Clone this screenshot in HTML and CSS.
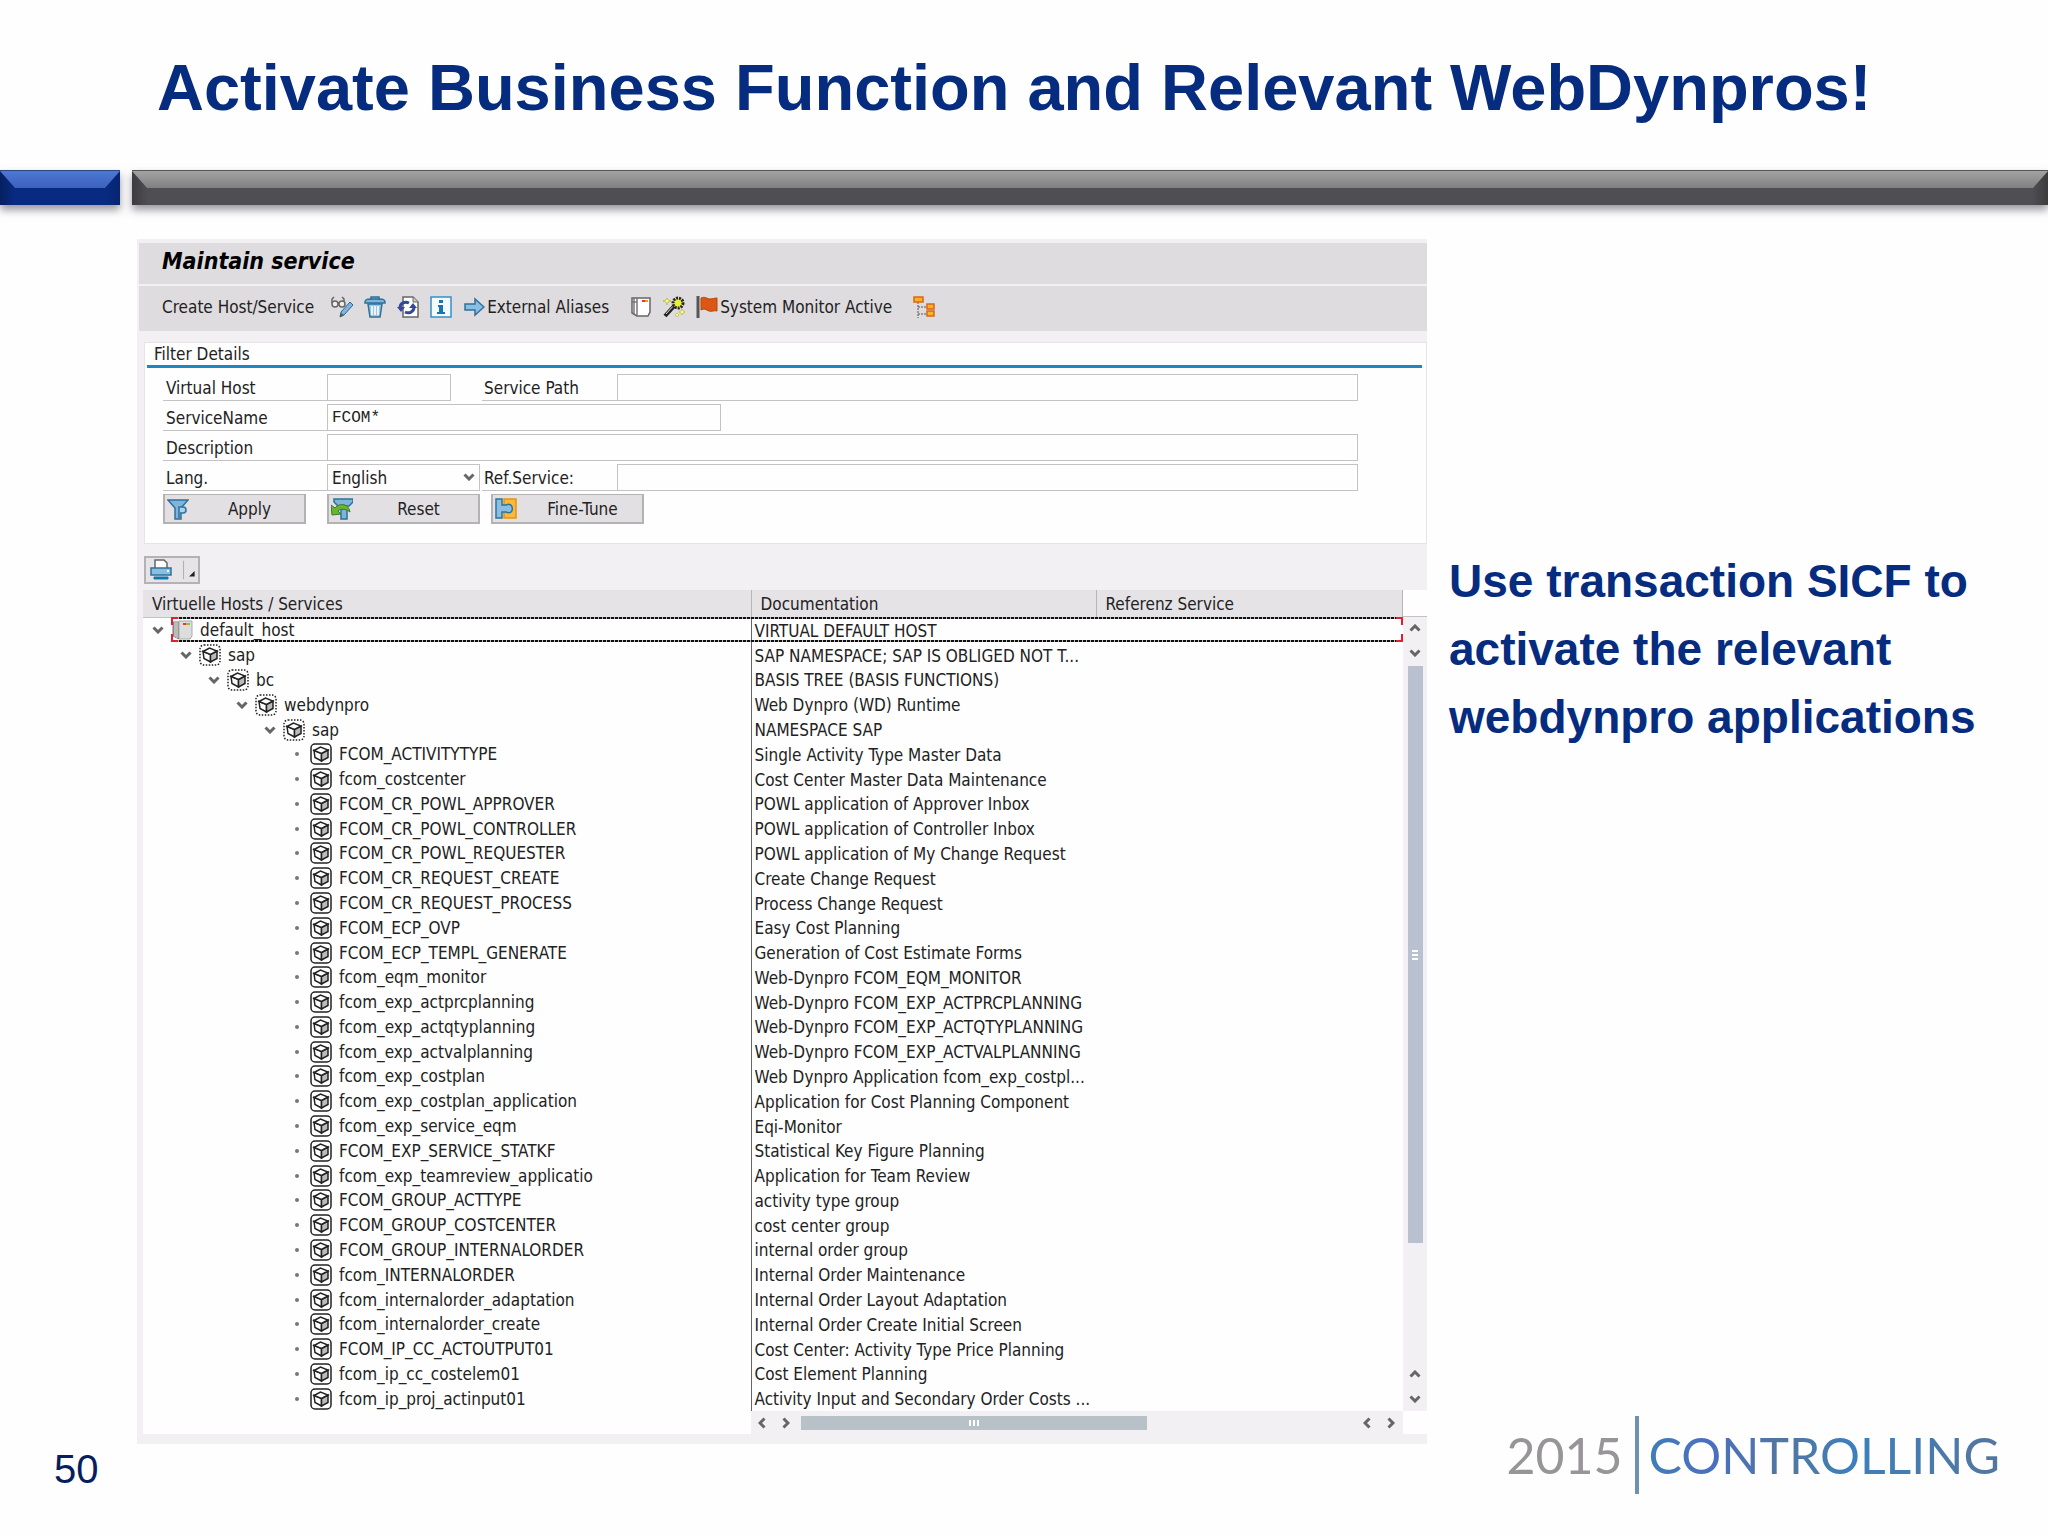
FILE: index.html
```html
<!DOCTYPE html>
<html lang="en">

<head>
  <meta charset="UTF-8">
  <meta name="viewport" content="width=device-width, initial-scale=1.0">
  <title>Activate Business Function and Relevant WebDynpros!</title>
  <link rel="stylesheet" href="styles.css">
</head>

<body>
  <!-- shared icons -->
  <svg class="symbols" aria-hidden="true">
    <symbol id="down" viewBox="0 0 12 8">
      <path d="M1.5 1.5 6 6l4.500-4.500" fill="none" stroke="#666" stroke-width="3" />
    </symbol>
    <symbol id="dot" viewBox="0 0 12 8">
      <circle cx="6" cy="4" r="2" fill="#777" />
    </symbol>
    <symbol id="cube" viewBox="0 0 22 22">
      <path d="M4 7.500 11.500 10.500V18L5 14.500Z" fill="#fff" stroke="#222" stroke-width="1.500" />
      <path d="M11.500 10.500 18 7v7.500L11.500 18Z" fill="#bbb" stroke="#222" stroke-width="1.500" />
      <path d="M4 7.500 10.500 4 18 7l-6.500 3.500Z" fill="#fff" stroke="#222" stroke-width="1.500" />
    </symbol>
    <symbol id="service" viewBox="0 0 22 22">
      <rect x="1" y="1" width="20" height="20" rx="4" fill="#fff" stroke="#222" stroke-width="1.500" />
      <use href="#cube" width="22" height="22" />
    </symbol>
    <symbol id="node" viewBox="0 0 22 22">
      <rect x="1" y="1" width="20" height="20" rx="4" fill="#fff" stroke="#222" stroke-width="1.500" stroke-dasharray="1.500 1.500" />
      <use href="#cube" width="22" height="22" />
    </symbol>
    <symbol id="host" viewBox="0 0 22 22">
      <path d="M2 3h6v17l-6-3Z" fill="#999" stroke="#777" />
      <path d="M4 3v15M6 3v16" stroke="#ddd" />
      <path d="M8 2h13v15l-2 3H8Z" fill="#ddd" stroke="#aaa" />
      <path d="M12 4h3v2h-3Z" fill="#e33" />
      <path d="M15 4h4v2h-4Z" fill="#9b3" />
    </symbol>
  </svg>

  <header>
    <h1>Activate Business Function and Relevant WebDynpros!</h1>
    <div class="rule">
      <span class="bar bar-blue"></span>
      <span class="bar bar-grey"></span>
    </div>
  </header>

  <main>
    <section class="window">
      <h2>Maintain service</h2>
      <div class="toolbar">
        <button type="button" class="create">Create Host/Service</button>
        <button type="button" aria-label="Display / Change">
          <svg class="icon" viewBox="0 0 22 22">
            <g fill="#eee" stroke="#666" stroke-width="1.500">
              <circle cx="4" cy="8" r="3" />
              <circle cx="11" cy="8" r="3" />
              <path d="M1 7V3l2-2M8 7h-1M13 6V3l-2-2" fill="none" />
            </g>
            <path d="m9 21 1-5L19 6l3 3-9 10Z" fill="#7fb4dc" stroke="#2a6a94" />
            <path d="m9 21 1-4 3 2Z" fill="#555" />
          </svg>
        </button>
        <button type="button" aria-label="Delete">
          <svg class="icon" viewBox="0 0 22 22">
            <path d="M4 8h14l-2 13H6Z" fill="#9cc8e6" stroke="#2f7199" stroke-width="1.500" />
            <path d="M8 10v9M11 10v9M14 10v9" stroke="#fff" stroke-width="1.500" />
            <path d="M7 3V1h8v2M1 6c0-3 2-3 10-3s10 0 10 3v1H1Z" fill="#7fb4dc" stroke="#2f7199" stroke-width="1.500" />
          </svg>
        </button>
        <button type="button" aria-label="Refresh">
          <svg class="icon" viewBox="0 0 22 22">
            <path d="M6 1h10l5 5v15H6Z" fill="#fff" stroke="#666" stroke-width="1.500" />
            <path d="M16 1v5h5" fill="#ccc" stroke="#666" />
            <path d="M3 12c0-5 5-7 9-5M17 11c0 5-5 7-9 5" fill="none" stroke="#35499c" stroke-width="3" />
            <path d="M0 11h8l-4 5ZM12 12h8l-4-5Z" fill="#35499c" />
          </svg>
        </button>
        <button type="button" aria-label="Information">
          <svg class="icon" viewBox="0 0 22 22">
            <rect x="1" y="1" width="20" height="20" fill="#f4fbff" stroke="#3590c8" stroke-width="1.500" />
            <path d="M9 4h4v3H9ZM8 9h5v7h2v2H7v-2h2v-5H8Z" fill="#1577ad" />
          </svg>
        </button>
        <button type="button">
          <svg class="icon" viewBox="0 0 22 22">
            <path d="M2 8h10V3l9 8-9 8v-5H2Z" fill="#8abfe3" stroke="#2f7199" stroke-width="1.500" />
          </svg>
          External Aliases
        </button>
        <button type="button" class="spaced" aria-label="Server">
          <svg class="icon" viewBox="0 0 22 22">
            <path d="M2 2h18v14l-2 4H7l-5-3Z" fill="#fff" stroke="#666" stroke-width="1.500" />
            <path d="M7 2v17M4 2v16M2 6h5" stroke="#777" stroke-width="1.500" />
            <path d="M12 4h3v2h-3Z" fill="#e33" />
            <path d="M15 4h3v2h-3Z" fill="#f90" />
          </svg>
        </button>
        <button type="button" aria-label="Wizard">
          <svg class="icon" viewBox="0 0 22 22">
            <path d="m2 20 11-12" stroke="#222" stroke-width="4" />
            <path d="m3 18 9-10" stroke="#ddd" />
            <circle cx="15" cy="7" r="5" fill="#e6f03c" stroke="#222" stroke-width="3" stroke-dasharray="2 1" />
            <path d="m4 2 1 2 3 1-3 1-1 3-1-3-3-1 3-1ZM19 13l1 2 2 1-2 1-1 2-1-2-2-1 2-1ZM14 17l2 2-2 2-2-2Z" fill="#ffff70" stroke="#98a020" stroke-width="0.500" />
          </svg>
        </button>
        <button type="button">
          <svg class="icon" viewBox="0 0 22 22">
            <path d="M2 0v22" stroke="#555" stroke-width="3" />
            <path d="M5 2c4-2 6 1 9 1s4-1 7-1v13c-3-1-5 1-8 0s-4-3-8-1Z" fill="#dc5716" stroke="#b5480f" />
          </svg>
          System Monitor Active
        </button>
        <button type="button" class="spaced" aria-label="Hierarchy">
          <svg class="icon" viewBox="0 0 22 22">
            <path d="M5 6v16M5 11h9M5 18h9" fill="none" stroke="#555" stroke-dasharray="2 1" />
            <path d="M1 1h9v5H1ZM14 8h7v5h-7ZM14 15h7v5h-7Z" fill="#fbb321" stroke="#d9651c" stroke-width="1.500" />
          </svg>
        </button>
      </div>

      <form class="filter">
        <h3>Filter Details</h3>
        <div class="fields">
          <div class="row">
            <label for="vhost">Virtual Host</label>
            <input type="text" id="vhost" class="short">
            <label for="path" class="second after-gap">Service Path</label>
            <input type="text" id="path" class="fill">
          </div>
          <div class="row">
            <label for="sname">ServiceName</label>
            <input type="text" id="sname" class="medium" value="FCOM*">
          </div>
          <div class="row">
            <label for="desc">Description</label>
            <input type="text" id="desc" class="fill">
          </div>
          <div class="row">
            <label for="lang">Lang.</label>
            <span class="select">
              <select id="lang">
                <option>English</option>
              </select>
              <svg class="arrow" viewBox="0 0 12 8"><use href="#down" /></svg>
            </span>
            <label for="ref" class="second">Ref.Service:</label>
            <input type="text" id="ref" class="fill">
          </div>
          <div class="buttons">
            <button type="button" class="apply">
              <svg class="icon" viewBox="0 0 22 22">
                <path d="M1 2h20l-7 8v11H8V10Z" fill="#7fb4dc" stroke="#2f7199" stroke-width="1.500" />
                <path d="M12 20V9h4c4 0 4 6 0 6h-3" fill="#a9d2ee" stroke="#2f7199" stroke-width="1.500" />
              </svg>
              <span>Apply</span>
            </button>
            <button type="button" class="reset">
              <svg class="icon" viewBox="0 0 22 22">
                <path d="M3 1h19v3l-4 4H7L3 4Z" fill="#7fb4dc" stroke="#2f7199" stroke-width="1.500" />
                <path d="M10 11h6v10h-6Z" fill="#7fb4dc" stroke="#2f7199" stroke-width="1.500" />
                <path d="m0 7 1 10 9-1-3-3c3-3 8-2 12 1-1-8-10-10-15-4Z" fill="#69b52f" stroke="#3b7d22" />
              </svg>
              <span>Reset</span>
            </button>
            <button type="button">
              <svg class="icon" viewBox="0 0 22 22">
                <path d="M9 1h12v19H9Z" fill="#fbb93c" stroke="#e8940c" stroke-width="1.500" />
                <path d="M1 1h6v6h4c8-4 9 11 0 7H7v6H1Z" fill="#8abfe3" stroke="#2f7199" stroke-width="1.500" />
              </svg>
              <span>Fine-Tune</span>
            </button>
          </div>
        </div>
      </form>

      <button type="button" class="print" aria-label="Print">
        <svg class="icon" viewBox="0 0 22 22">
          <path d="M5 10V1h9l3 3v6" fill="#fff" stroke="#666" stroke-width="1.500" />
          <path d="M1 9h20v7H1Z" fill="#8abfe3" stroke="#2f7199" stroke-width="1.500" />
          <path d="M17 11h2v2h-2Z" fill="#fff" />
          <path d="M4 18h14v2H4Z" fill="#1577ad" stroke="#1577ad" />
        </svg>
        <svg class="menu" viewBox="0 0 16 26">
          <path d="M1 3v20" stroke="#aaa" />
          <path d="M13 14v6H7Z" fill="#222" />
        </svg>
      </button>

      <div class="tree">
        <table>
          <thead>
            <tr>
              <th class="col-name">Virtuelle Hosts / Services</th>
              <th class="col-doc">Documentation</th>
              <th>Referenz Service</th>
            </tr>
          </thead>
          <tbody id="services"></tbody>
        </table>
        <div class="vscroll">
          <div class="track">
            <svg class="arrow flip" viewBox="0 0 12 8"><use href="#down" /></svg>
            <svg class="arrow" viewBox="0 0 12 8"><use href="#down" /></svg>
            <div class="thumb"><i></i><i></i><i></i></div>
            <svg class="arrow flip last" viewBox="0 0 12 8"><use href="#down" /></svg>
            <svg class="arrow" viewBox="0 0 12 8"><use href="#down" /></svg>
          </div>
        </div>
      </div>
      <div class="foot">
        <div class="hscroll">
          <svg class="arrow left" viewBox="0 0 12 8"><use href="#down" /></svg>
          <svg class="arrow right" viewBox="0 0 12 8"><use href="#down" /></svg>
          <div class="thumb"><i></i><i></i><i></i></div>
          <svg class="arrow left last" viewBox="0 0 12 8"><use href="#down" /></svg>
          <svg class="arrow right" viewBox="0 0 12 8"><use href="#down" /></svg>
        </div>
      </div>
    </section>

    <aside>
      <p>Use transaction SICF to activate the relevant webdynpro applications</p>
    </aside>
  </main>

  <footer>
    <span class="page">50</span>
    <div class="logo">
      <span class="year">2015</span>
      <span class="name">CONTROLLING</span>
    </div>
  </footer>

  <script>
    // level, name, documentation
    const services = [
      [0, 'default_host', 'VIRTUAL DEFAULT HOST'],
      [1, 'sap', 'SAP NAMESPACE; SAP IS OBLIGED NOT T...'],
      [2, 'bc', 'BASIS TREE (BASIS FUNCTIONS)'],
      [3, 'webdynpro', 'Web Dynpro (WD) Runtime'],
      [4, 'sap', 'NAMESPACE SAP'],
      [5, 'FCOM_ACTIVITYTYPE', 'Single Activity Type Master Data'],
      [5, 'fcom_costcenter', 'Cost Center Master Data Maintenance'],
      [5, 'FCOM_CR_POWL_APPROVER', 'POWL application of Approver Inbox'],
      [5, 'FCOM_CR_POWL_CONTROLLER', 'POWL application of Controller Inbox'],
      [5, 'FCOM_CR_POWL_REQUESTER', 'POWL application of My Change Request'],
      [5, 'FCOM_CR_REQUEST_CREATE', 'Create Change Request'],
      [5, 'FCOM_CR_REQUEST_PROCESS', 'Process Change Request'],
      [5, 'FCOM_ECP_OVP', 'Easy Cost Planning'],
      [5, 'FCOM_ECP_TEMPL_GENERATE', 'Generation of Cost Estimate Forms'],
      [5, 'fcom_eqm_monitor', 'Web-Dynpro FCOM_EQM_MONITOR'],
      [5, 'fcom_exp_actprcplanning', 'Web-Dynpro FCOM_EXP_ACTPRCPLANNING'],
      [5, 'fcom_exp_actqtyplanning', 'Web-Dynpro FCOM_EXP_ACTQTYPLANNING'],
      [5, 'fcom_exp_actvalplanning', 'Web-Dynpro FCOM_EXP_ACTVALPLANNING'],
      [5, 'fcom_exp_costplan', 'Web Dynpro Application fcom_exp_costpl...'],
      [5, 'fcom_exp_costplan_application', 'Application for Cost Planning Component'],
      [5, 'fcom_exp_service_eqm', 'Eqi-Monitor'],
      [5, 'FCOM_EXP_SERVICE_STATKF', 'Statistical Key Figure Planning'],
      [5, 'fcom_exp_teamreview_applicatio', 'Application for Team Review'],
      [5, 'FCOM_GROUP_ACTTYPE', 'activity type group'],
      [5, 'FCOM_GROUP_COSTCENTER', 'cost center group'],
      [5, 'FCOM_GROUP_INTERNALORDER', 'internal order group'],
      [5, 'fcom_INTERNALORDER', 'Internal Order Maintenance'],
      [5, 'fcom_internalorder_adaptation', 'Internal Order Layout Adaptation'],
      [5, 'fcom_internalorder_create', 'Internal Order Create Initial Screen'],
      [5, 'FCOM_IP_CC_ACTOUTPUT01', 'Cost Center: Activity Type Price Planning'],
      [5, 'fcom_ip_cc_costelem01', 'Cost Element Planning'],
      [5, 'fcom_ip_proj_actinput01', 'Activity Input and Secondary Order Costs ...']
    ];

    document.getElementById('services').innerHTML = services.map(([level, name, doc]) => {
      const marker = level === 5 ? 'dot' : 'down';
      const icon = level === 0 ? 'host' : level === 5 ? 'service' : 'node';
      return `<tr${level === 0 ? ' class="selected"' : ''}>
        <td><div class="item level-${level}">
          <svg class="arrow" viewBox="0 0 12 8"><use href="#${marker}"/></svg>
          <svg class="icon" viewBox="0 0 22 22"><use href="#${icon}"/></svg>
          <span>${name}</span>
        </div></td>
        <td>${doc}</td>
        <td>${level === 0 ? '<div class="outline"></div>' : ''}</td>
      </tr>`;
    }).join('');
  </script>
</body>

</html>
```
FILE: styles.css
```css
* {
  box-sizing: border-box;
}

body {
  margin: 0;
  background: #fefefe;
  color: #222;
  font: 17px/24px "DejaVu Sans Condensed", "DejaVu Sans", sans-serif;
}

.symbols {
  display: none;
}

h1, h2, h3, p {
  margin: 0;
}

h1 {
  padding: 40px 0 34px 157px;
  font: bold 65px/96px "Liberation Sans", Arial, sans-serif;
  color: #062c80;
}

/* bevelled rule under the title */
.rule {
  display: flex;
  gap: 12px;
}

.bar {
  height: 35px;
  border-top: 1px solid #555;
  box-shadow: 0 5px 8px rgba(60, 50, 70, 0.5);
}

.bar::before {
  content: "";
  display: block;
  height: 17px;
  clip-path: polygon(0 0, 100% 0, calc(100% - 15px) 100%, 15px 100%);
}

.bar-blue {
  width: 120px;
  border-top-color: #2a4580;
  background: linear-gradient(90deg, #062060, #082a80 14px, #082a80 106px, #062470);
}

.bar-blue::before {
  background: linear-gradient(#4c77d4, #3c62bd);
}

.bar-grey {
  flex: 1;
  background: linear-gradient(90deg, #3c3c3e, #4f4e53 16px, #4f4e53 calc(100% - 16px), #3c3c3e);
}

.bar-grey::before {
  background: linear-gradient(#a3a3a4, #808081);
}

main {
  display: flex;
  align-items: flex-start;
  padding: 34px 0 0 137px;
}

/* SAP window */
.window {
  flex: 1;
  padding: 4px 0 10px 2px;
  background: #f2f0f3;
}

h2 {
  padding: 0 23px 4px;
  background: #dedcdf;
  color: #000;
  font: italic bold 23px/37px "DejaVu Sans Condensed", "DejaVu Sans", sans-serif;
}

.toolbar {
  display: flex;
  align-items: center;
  gap: 11px;
  height: 45px;
  margin: 2px 0 11px;
  padding: 0 23px 4px;
  background: #dedcdf;
}

button,
input,
select {
  margin: 0;
  padding: 0;
  border: 0;
  color: #222;
  font: inherit;
}

.toolbar button {
  display: flex;
  align-items: center;
  gap: 2px;
  background: none;
  white-space: nowrap;
}

.toolbar .create {
  margin-right: 6px;
}

.toolbar .spaced {
  margin-left: 10px;
}

.icon {
  flex: none;
  width: 22px;
  height: 22px;
}

.arrow {
  flex: none;
  width: 12px;
  height: 8px;
}

.filter {
  margin-left: 5px;
  padding: 0 4px 19px 2px;
  border: 1px solid #e6e4e7;
  background: #fefefe;
}

h3 {
  padding: 0 7px;
  border-bottom: 3px solid #1f86c4;
  font-size: 17px;
  font-weight: normal;
  line-height: 22px;
}

.fields {
  display: flex;
  flex-direction: column;
  gap: 3px;
  padding: 6px 64px 0 16px;
}

.row {
  display: flex;
  height: 27px;
}

.row label {
  width: 164px;
  padding: 2px 3px 0;
  border-bottom: 1px solid #c4c2c5;
}

.row .second {
  width: 135px;
  margin-left: 2px;
  padding-left: 2px;
}

.row .after-gap {
  margin-left: 31px;
}

.row input,
.row select {
  padding: 0 4px;
  border: 1px solid #c4c2c5;
  background: #fefefe;
}

.row input {
  font-family: "Liberation Mono", "Courier New", monospace;
  font-size: 16px;
}

.short {
  width: 124px;
}

.medium {
  width: 394px;
}

.fill {
  flex: 1;
  min-width: 0;
}

.select {
  position: relative;
  display: flex;
  width: 153px;
}

.select select {
  flex: 1;
  appearance: none;
}

.select .arrow {
  position: absolute;
  top: 9px;
  right: 5px;
  pointer-events: none;
}

.buttons {
  display: flex;
}

.buttons button {
  display: flex;
  align-items: center;
  width: 153px;
  height: 30px;
  padding: 0 2px;
  border: 2px solid #b4b2b5;
  border-top-width: 1px;
  background: #e2e0e3;
}

.buttons .apply {
  width: 143px;
  margin-right: 21px;
}

.buttons .reset {
  margin-right: 11px;
}

.buttons span {
  flex: 1;
  padding-left: 8px;
}

.print {
  display: flex;
  align-items: center;
  width: 56px;
  height: 28px;
  margin: 12px 0 6px 5px;
  padding: 0 0 0 4px;
  border: 2px solid #b4b2b5;
  background: #e6e4e7;
}

.print .menu {
  width: 16px;
  height: 24px;
  margin-left: 10px;
}

/* service tree */
.tree {
  display: flex;
  margin-left: 4px;
  background: #fefefe;
}

table {
  flex: 1;
  height: 821px;
  border-collapse: collapse;
  table-layout: fixed;
}

th {
  height: 27px;
  padding: 2px 9px 0;
  border-right: 1px solid #b8b6b9;
  border-bottom: 1px solid #c4c2c5;
  background: #e5e3e6;
  font-weight: normal;
  line-height: 22px;
  text-align: left;
}

.col-name {
  width: 608px;
}

.col-doc {
  width: 345px;
}

td {
  padding: 2px 3px 0;
  line-height: 22px;
  white-space: nowrap;
}

td:first-child {
  padding: 1px 0 0;
  border-right: 1px solid #666;
}

.item {
  display: flex;
  align-items: center;
  gap: 7px;
  padding-left: 9px;
}

.level-1 {
  padding-left: 37px;
}

.level-2 {
  padding-left: 65px;
}

.level-3 {
  padding-left: 93px;
}

.level-4 {
  padding-left: 121px;
}

.level-5 {
  padding-left: 148px;
}

.selected {
  position: relative;
}

.outline {
  position: absolute;
  inset: 0 0 0 28px;
  background:
    repeating-linear-gradient(90deg, #111 0 3px, #bbb 3px 4px) top / 100% 2px no-repeat,
    repeating-linear-gradient(90deg, #111 0 3px, #bbb 3px 4px) bottom / 100% 2px no-repeat;
}

/* red corner brackets, open in the middle */
.outline::before,
.outline::after {
  content: "";
  position: absolute;
  top: 0;
  bottom: 0;
  left: 0;
  width: 7px;
  background:
    linear-gradient(#e0202c, #e0202c) top / 100% 2px no-repeat,
    linear-gradient(#e0202c, #e0202c) bottom / 100% 2px no-repeat,
    linear-gradient(#e0202c 8px, transparent 8px 17px, #e0202c 17px) left / 2px 100% no-repeat;
}

.outline::after {
  right: 0;
  left: auto;
  transform: scaleX(-1);
}

/* scrollbars */
.vscroll {
  display: flex;
  width: 24px;
  padding-top: 26px;
}

.track {
  display: flex;
  flex: 1;
  flex-direction: column;
  align-items: center;
  gap: 17px;
  padding: 7px 0 8px;
  border-top: 1px solid #c4c2c5;
  background: #f2f0f3;
}

.thumb {
  display: flex;
  align-items: center;
  justify-content: center;
  gap: 2px;
  background: #b9c0cf;
}

.thumb i {
  background: #fff;
}

.vscroll .thumb {
  flex-direction: column;
  width: 15px;
  height: 577px;
  margin-top: -8px;
}

.vscroll i {
  width: 6px;
  height: 2px;
}

.flip {
  transform: rotate(180deg);
}

.vscroll .last {
  margin-top: auto;
}

.foot {
  margin: 0 24px 0 4px;
  padding-left: 608px;
  background: #fefefe;
  box-shadow: 24px 0 #fefefe;
}

.hscroll {
  display: flex;
  align-items: center;
  gap: 12px;
  height: 23px;
  padding: 0 6px 0 5px;
  background: #f2f0f3;
}

.hscroll .thumb {
  width: 346px;
  height: 14px;
  margin-left: -3px;
  background: #b9c1c8;
}

.hscroll i {
  width: 2px;
  height: 6px;
}

.left {
  transform: rotate(90deg);
}

.right {
  transform: rotate(-90deg);
}

.hscroll .last {
  margin-left: auto;
}

aside {
  width: 621px;
  padding: 308px 60px 0 22px;
  color: #062c80;
  font: bold 46px/68px "Liberation Sans", Arial, sans-serif;
}

footer {
  display: flex;
  align-items: flex-start;
  justify-content: space-between;
  padding: 0 48px 0 54px;
}

.page {
  padding-top: 2px;
  color: #061e5e;
  font: 40px/46px "Liberation Sans", Arial, sans-serif;
}

/* logo is taller than the footer line and reaches up beside the window */
.logo {
  display: flex;
  margin-top: -28px;
  font: 50px/78px Lato, sans-serif;
}

.year {
  padding-right: 12px;
  border-right: 4px solid #6d90b4;
  color: #989599;
}

.name {
  padding-left: 10px;
  background: linear-gradient(90deg, #3f7fb6, #4a6fc0 20%, #52779f 40%, #3c7fbd 60%, #54769c);
  background-clip: text;
  color: transparent;
}
```
